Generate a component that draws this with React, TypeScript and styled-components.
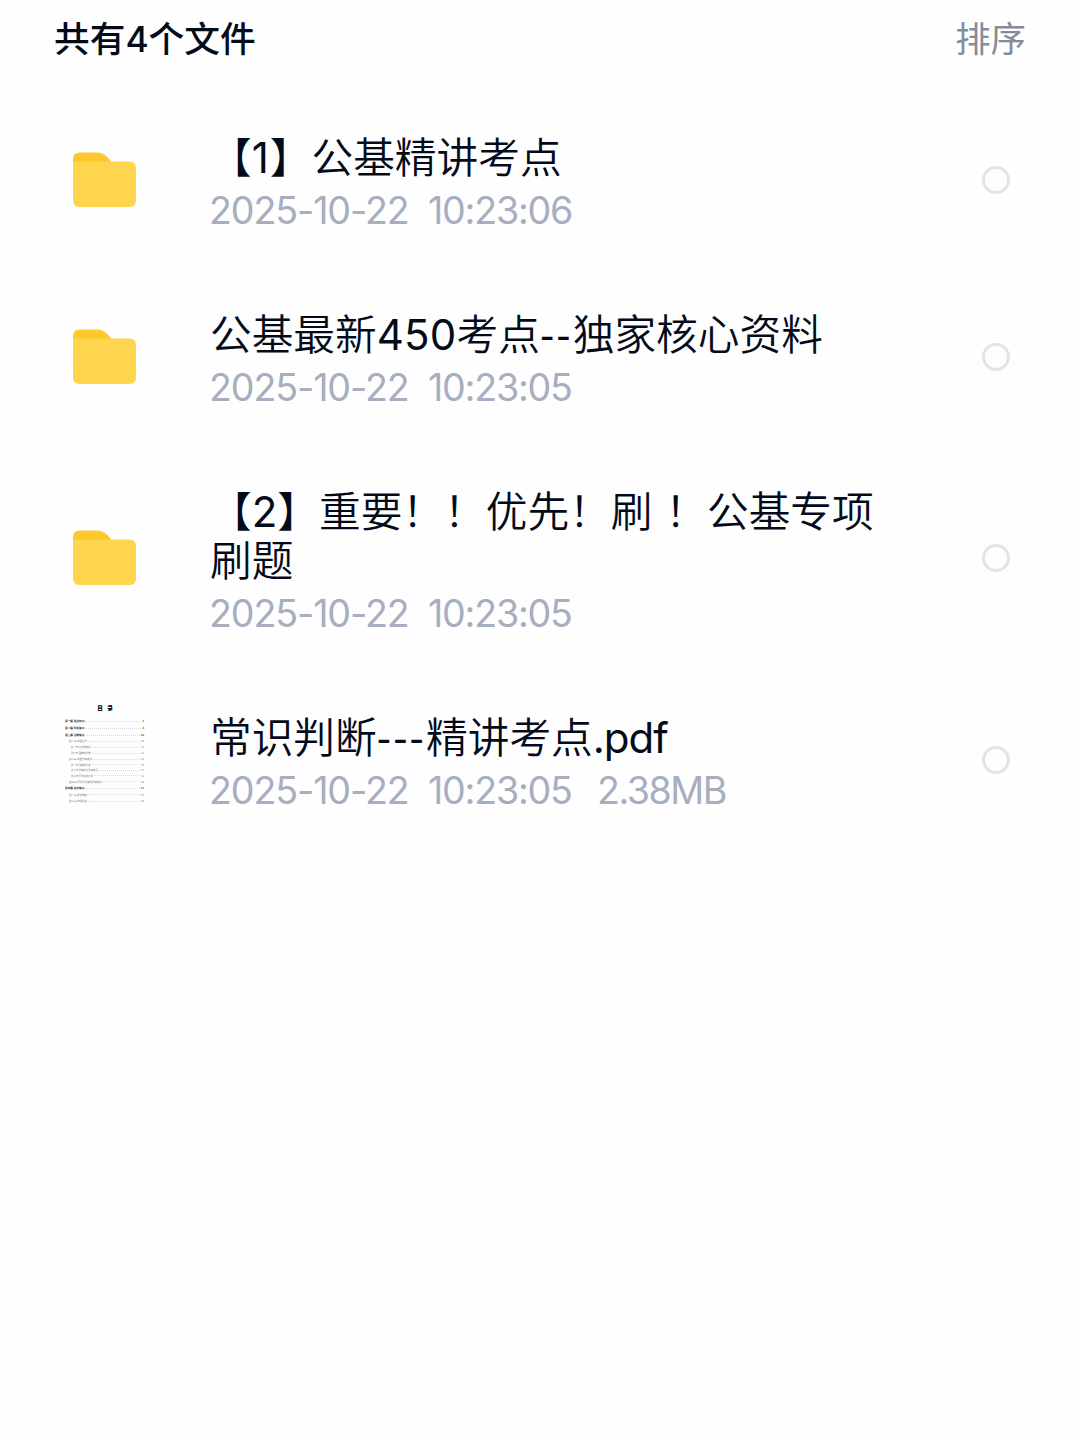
import React from 'react';
import styled, { createGlobalStyle } from 'styled-components';

const GlobalStyle = createGlobalStyle`
  * { box-sizing: border-box; }
  body {
    margin: 0;
    background: #fefefe;
    font-family: Inter, "Noto Sans CJK SC", sans-serif;
  }
`;

const Page = styled.main`
  width: 1080px;
  height: 1434px;
  display: flex;
  flex-direction: column;
  overflow: hidden;
  background: #fefefe;
`;

const Header = styled.header`
  height: 91px;
  flex: none;
  display: flex;
  justify-content: space-between;
  align-items: flex-start;
  padding: 11px 54px 0;
  font-family: "Noto Sans CJK SC", sans-serif;
  font-size: 35.4px;
  line-height: 52px;
`;

const Count = styled.h1`
  margin: 0;
  font-size: 35.7px;
  font-weight: 500;
  color: #030b1a;
  white-space: nowrap;
`;

const SortButton = styled.button`
  border: 0;
  padding: 0;
  background: none;
  font: inherit;
  color: #858b99;
`;

const List = styled.ul`
  margin: 0;
  padding: 0;
  list-style: none;
`;

const Row = styled.li<{ $tall?: boolean }>`
  display: grid;
  grid-template-columns: 92px 728px 28px;
  column-gap: 52px;
  height: ${(p) => (p.$tall ? 226 : 177)}px;
  padding-left: 58px;
  align-items: center;
`;

const IconCell = styled.div`
  display: flex;
  align-items: center;
  justify-content: center;
`;

const Info = styled.div`
  align-self: start;
  padding: 40px 0 0 8px;
`;

const Name = styled.div`
  font-family: "Noto Sans CJK SC", sans-serif;
  font-size: 41.7px;
  font-weight: 350;
  line-height: 49px;
  color: #030b1a;
  white-space: pre;
`;

const Latin = styled.span<{ $track?: number; $size?: number; $weight?: number }>`
  font-family: Inter, "Liberation Sans", sans-serif;
  font-size: ${(p) => p.$size ?? 42}px;
  font-weight: ${(p) => p.$weight ?? 400};
  line-height: 1;
  letter-spacing: ${(p) => p.$track ?? 0}px;
`;

const Dashes = styled.span`
  font-family: "Liberation Sans", sans-serif;
  font-size: 43px;
  line-height: 1;
  letter-spacing: 2.1px;
`;

const Meta = styled.div`
  display: flex;
  margin-top: 7px;
  font-size: 37.6px;
  line-height: 48px;
  color: #a7aec0;
  white-space: nowrap;
`;

const DateText = styled.span`
  width: 219px;
  margin-left: -1px;
  letter-spacing: -1.1px;
`;

const TimeText = styled.span`
  width: 169px;
  letter-spacing: -1.2px;
`;

const SizeText = styled.span`
  letter-spacing: -1.5px;
`;

const Radio = styled.span`
  width: 28px;
  height: 28px;
  border: 3px solid #e4e4e5;
  border-radius: 50%;
`;

const Sheet = styled.div`
  width: 92px;
  height: 110px;
  padding: 0 6px 0 7px;
  color: #222;
  font-family: "Noto Sans CJK SC", sans-serif;
`;

const SheetTitle = styled.div`
  height: 14px;
  padding-left: 1px;
  text-align: center;
  font-size: 5.6px;
  font-weight: 900;
  line-height: 7px;
  word-spacing: 3px;
  color: #000;
`;

const SheetLine = styled.div<{ $level: number }>`
  display: flex;
  align-items: center;
  height: ${(p) => [6.7, 6.3, 5.5][p.$level]}px;
  padding-left: ${(p) => [0, 4, 6][p.$level]}px;
  font-size: ${(p) => [2.7, 2.5, 2.4][p.$level]}px;
  font-weight: ${(p) => (p.$level === 0 ? 700 : 400)};
  line-height: 1;
  white-space: nowrap;
  color: ${(p) => (p.$level === 0 ? '#333' : '#777')};
`;

const Leader = styled.span`
  flex: 1;
  margin: 0 1px;
  border-top: 1px dotted #ddd;
`;

const Folder = () => (
  <svg width="64" height="56" viewBox="0 0 64 56" aria-hidden="true">
    <defs>
      <linearGradient id="tab" x1="0" y1="0" x2="0" y2="1">
        <stop offset="0" stopColor="#fecb32" />
        <stop offset="0.5" stopColor="#ffc526" />
      </linearGradient>
    </defs>
    <path d="M1 7Q1 .5 7.5 .5H25Q33 .5 39 9.5V22H1Z" fill="url(#tab)" />
    <path d="M1 9.5H57.5Q64 9.5 64 16V48.5Q64 55 57.5 55H7.5Q1 55 1 48.5Z" fill="#ffd54d" />
  </svg>
);

const contents: [number, string, string][] = [
  [0, '第一篇 政治知识', '1'],
  [0, '第二篇 时政常识', '8'],
  [0, '第三篇 法律常识', '19'],
  [1, '第一章 中国宪法', '20'],
  [2, '第一节 宪法的知识', '24'],
  [2, '第二节 国家的机构', '31'],
  [1, '第二章 中国法律常识', '34'],
  [2, '第一节 法律的分类', '36'],
  [2, '第二节 民事诉讼法律常识', '37'],
  [2, '第三节 民法总则分析', '41'],
  [1, '第三章 行政法及其他法律常识', '46'],
  [0, '第四篇 经济常识', '47'],
  [1, '第一章 宏观调控', '67'],
  [1, '第二章 市场经济', '80'],
];

const Thumbnail = () => (
  <Sheet>
    <SheetTitle>目 录</SheetTitle>
    {contents.map(([level, label, page]) => (
      <SheetLine key={label} $level={level}>
        {label}
        <Leader />
        {page}
      </SheetLine>
    ))}
  </Sheet>
);

interface FileItem {
  name: React.ReactNode;
  time: string;
  size?: string;
  tall?: boolean;
}

const files: FileItem[] = [
  { name: <>【<Latin $track={1}>1</Latin>】公基精讲考点</>, time: '10:23:06' },
  {
    name: <>公基最新<Latin $track={0.2}>450</Latin>考点<Dashes>--</Dashes>独家核心资料</>,
    time: '10:23:05',
  },
  {
    name: <>【<Latin>2</Latin>】重要！！优先！刷<Latin $track={1}> </Latin>！公基专项{'\n'}刷题</>,
    time: '10:23:05',
    tall: true,
  },
  {
    name: <>常识判断<Dashes>---</Dashes>精讲考点<Latin $track={-1}>.pdf</Latin></>,
    time: '10:23:05',
    size: '2.38MB',
  },
];

export default function App() {
  return (
    <Page>
      <GlobalStyle />
      <Header>
        <Count>共有<Latin $size={35.4} $weight={500}>4</Latin>个文件</Count>
        <SortButton>排序</SortButton>
      </Header>
      <List>
        {files.map((file, i) => (
          <Row key={i} $tall={file.tall}>
            <IconCell>{file.size ? <Thumbnail /> : <Folder />}</IconCell>
            <Info>
              <Name>{file.name}</Name>
              <Meta>
                <DateText>2025-10-22</DateText>
                <TimeText>{file.time}</TimeText>
                {file.size && <SizeText>{file.size}</SizeText>}
              </Meta>
            </Info>
            <Radio />
          </Row>
        ))}
      </List>
    </Page>
  );
}
